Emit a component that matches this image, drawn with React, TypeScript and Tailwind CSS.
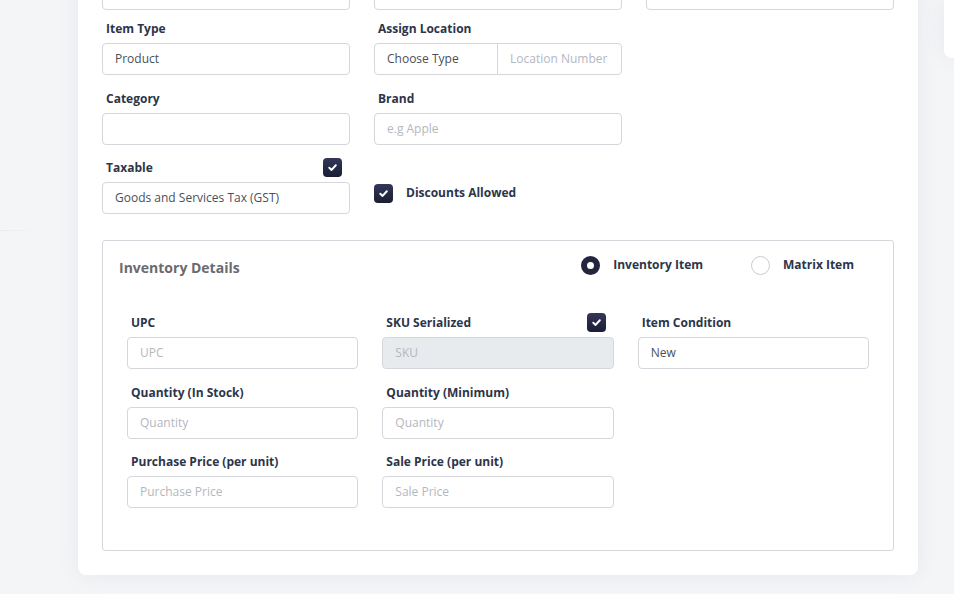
import React from 'react';

const font = { fontFamily: '"Open Sans", "Noto Sans", sans-serif' };

function Check() {
  return (
    <span className="flex h-[19px] w-[19px] shrink-0 items-center justify-center rounded-[4px] bg-gradient-to-b from-[#34375a] to-[#1b1e33]">
      <svg viewBox="0 0 12 12" className="h-[11px] w-[11px]" fill="none" stroke="white" strokeWidth="2.2" strokeLinecap="round" strokeLinejoin="round">
        <polyline points="2.5,6.3 5,8.6 9.6,3.6" />
      </svg>
    </span>
  );
}

function Label({ children, check }: { children?: React.ReactNode; check?: boolean }) {
  return (
    <div className="flex h-5 items-center justify-between pl-1 pr-2 text-[12px] font-bold leading-5 text-[#2c3549]">
      <span className="pt-0.5">{children}</span>
      {check && <Check />}
    </div>
  );
}

function Input({ value, placeholder, disabled }: { value?: string; placeholder?: string; disabled?: boolean }) {
  return (
    <div
      className={
        'mt-[5px] flex h-8 items-center rounded-[4px] border border-[#d5d7dc] px-3 text-[12px] ' +
        (disabled ? 'bg-[#e8ebee]' : 'bg-white')
      }
    >
      {value ? <span className="text-[#4b4f58]">{value}</span> : <span className="text-[#b3b8c0]">{placeholder}</span>}
    </div>
  );
}

function Field({ label, value, placeholder, check, disabled }: { label: string; value?: string; placeholder?: string; check?: boolean; disabled?: boolean }) {
  return (
    <div>
      <Label check={check}>{label}</Label>
      <Input value={value} placeholder={placeholder} disabled={disabled} />
    </div>
  );
}

function Radio({ checked, label }: { checked?: boolean; label: string }) {
  return (
    <div className="flex h-5 items-center gap-[13px]">
      {checked ? (
        <span className="h-[19px] w-[19px] rounded-full border-[6px] border-[#22253d] bg-white" />
      ) : (
        <span className="h-[19px] w-[19px] rounded-full border border-[#c9cdd4] bg-white" />
      )}
      <span className="text-[12px] font-bold text-[#2c3549]">{label}</span>
    </div>
  );
}

export default function App() {
  return (
    <div className="flex h-[594px] w-[954px] overflow-hidden bg-[#f4f5f7]" style={font}>
      {/* left gutter */}
      <div className="w-[78px] shrink-0">
        <div className="mt-[230px] h-px w-[40px] bg-gradient-to-r from-[#e8eaee] to-transparent" />
      </div>

      {/* main card */}
      <div className="-mt-[46px] h-[621px] w-[840px] shrink-0 rounded-lg bg-white px-6 pb-6 pt-6 shadow-[0_0_24px_rgba(30,35,60,0.06)]">
        <div className="grid grid-cols-3 gap-x-6">
          <div className="h-8 rounded-[4px] border border-[#d5d7dc]" />
          <div className="h-8 rounded-[4px] border border-[#d5d7dc]" />
          <div className="h-8 rounded-[4px] border border-[#d5d7dc]" />
        </div>

        <div className="mt-2 grid grid-cols-3 gap-x-6 gap-y-[12.5px]">
          <Field label="Item Type" value="Product" />
          <div>
            <Label>Assign Location</Label>
            <div className="mt-[5px] flex h-8 rounded-[4px] border border-[#d5d7dc] text-[12px]">
              <div className="flex w-1/2 items-center border-r border-[#d5d7dc] px-3 text-[#4b4f58]">Choose Type</div>
              <div className="flex w-1/2 items-center px-3 text-[#b3b8c0]">Location Number</div>
            </div>
          </div>
          <div />

          <Field label="Category" />
          <Field label="Brand" placeholder="e.g Apple" />
          <div />

          <Field label="Taxable" value="Goods and Services Tax (GST)" check />
          <div>
            <div className="h-5" />
            <div className="mt-[6px] flex h-5 items-center gap-[13px]">
              <Check />
              <span className="text-[12px] font-bold text-[#2c3549]">Discounts Allowed</span>
            </div>
          </div>
          <div />
        </div>

        {/* Inventory details */}
        <div className="mt-[26px] rounded-[3px] border border-[#d5d7dc] pb-[42px]">
          <div className="flex items-start justify-between pl-4 pr-[39px] pt-[14px]">
            <div className="mt-[3px] text-[14px] font-bold leading-5 text-[#6b6a6e]">Inventory Details</div>
            <div className="flex gap-12">
              <Radio checked label="Inventory Item" />
              <Radio label="Matrix Item" />
            </div>
          </div>

          <div className="mt-[34px] grid grid-cols-3 gap-x-6 gap-y-[12.5px] px-6">
            <Field label="UPC" placeholder="UPC" />
            <Field label="SKU Serialized" placeholder="SKU" check disabled />
            <Field label="Item Condition" value="New" />

            <Field label="Quantity (In Stock)" placeholder="Quantity" />
            <Field label="Quantity (Minimum)" placeholder="Quantity" />
            <div />

            <Field label="Purchase Price (per unit)" placeholder="Purchase Price" />
            <Field label="Sale Price (per unit)" placeholder="Sale Price" />
            <div />
          </div>
        </div>
      </div>

      {/* right panel */}
      <div className="ml-[26px] h-[58px] w-[300px] shrink-0 rounded-bl-lg bg-white shadow-[0_0_24px_rgba(30,35,60,0.06)]" />
    </div>
  );
}
